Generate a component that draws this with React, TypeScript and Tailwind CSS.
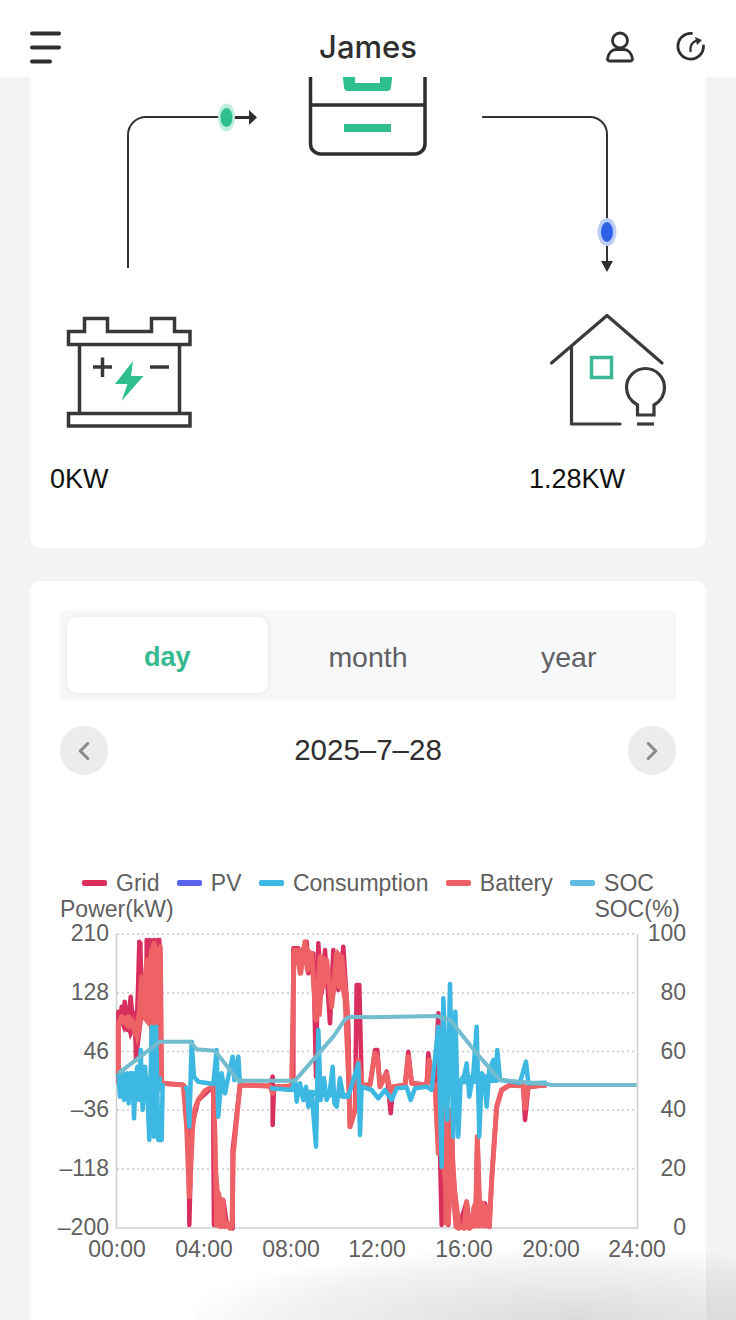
import React from "react";
import { ChevronLeft, ChevronRight } from "lucide-react";

type Pt = [number, number];

// traced from the 3x crops: left half starts at x=50, right half at x=370, both at y=860
const toLine = (left: Pt[], right: Pt[] = []) =>
  [
    ...left.map(([x, y]) => `${50 + x / 3},${860 + y / 3}`),
    ...right.map(([x, y]) => `${370 + x / 3},${860 + y / 3}`),
  ].join(" ");

const GRID = toLine(
  [[205,670],[205,455],[212,480],[215,440],[222,500],[224,425],[232,510],[242,410],[250,500],[255,460],[258,600],[268,245],[278,400],[290,380],[290,240],[296,400],[300,240],[306,340],[312,240],[318,420],[323,240],[328,240],[330,670],[400,675],[415,700],[418,1095],[425,800],[445,720],[490,678],[490,830],[492,1095],[502,1095],[505,1020],[520,1020],[530,1090],[548,1105],[548,870],[570,675],[660,678],[668,650],[668,795],[672,680],[730,680],[730,265],[745,265],[750,340],[770,245],[775,340],[790,280],[798,650],[805,250],[815,400],[825,270],[840,490],[850,270],[865,390],[880,260],[895,500],[900,800],[915,750],[920,375],[928,375],[935,675]],
  [[0,675],[15,570],[22,570],[30,680],[50,635],[62,760],[70,680],[105,675],[115,575],[125,670],[170,675],[175,580],[185,670],[195,675],[205,460],[210,880],[215,1095],[225,680],[235,1095],[245,900],[265,1105],[290,1025],[300,1105],[318,1030],[322,830],[330,1090],[345,1030],[358,1100],[365,960],[380,740],[395,690],[420,675],[460,678],[465,780],[475,680],[530,675]]
);

const BATTERY = toLine(
  [[205,670],[205,490],[215,470],[225,490],[235,470],[245,480],[255,520],[268,460],[275,350],[282,440],[290,300],[296,460],[303,280],[312,250],[320,290],[326,420],[331,260],[335,670],[400,675],[410,800],[418,1010],[428,800],[435,745],[445,720],[465,692],[490,678],[495,830],[500,1095],[506,1000],[512,1100],[518,1020],[524,1100],[532,1090],[540,1105],[546,1100],[550,880],[570,675],[660,678],[668,700],[680,680],[725,678],[732,270],[745,270],[752,340],[765,245],[772,330],[785,280],[798,480],[810,290],[820,380],[830,300],[845,440],[860,280],[868,380],[875,290],[890,420],[900,800],[915,750],[925,600],[935,675]],
  [[0,675],[15,580],[22,590],[30,680],[50,640],[62,700],[70,680],[105,675],[115,590],[125,670],[170,675],[178,600],[185,670],[195,675],[205,880],[208,640],[215,700],[225,590],[228,1090],[235,1090],[238,800],[245,750],[250,1000],[258,1100],[268,1105],[275,1100],[282,1105],[290,1025],[296,1105],[305,1100],[312,1040],[318,1030],[322,830],[330,1090],[338,1030],[345,1085],[352,1040],[358,1100],[365,960],[380,740],[395,690],[420,675],[460,678],[465,745],[475,680],[530,675]]
);

// where the spikes sit so close that the lines read as one solid mass
const GRID_MASS = [
  toLine([[205,455],[215,455],[222,425],[230,455],[242,410],[255,460],[268,245],[278,245],[278,400],[290,380],[290,240],[330,240],[332,670],[320,670],[318,420],[300,450],[290,440],[280,470],[265,590],[255,600],[250,520],[240,540],[230,500],[222,520],[212,490],[205,520]]),
];
const BATTERY_MASS = [
  toLine([[205,480],[225,465],[235,480],[255,500],[268,440],[275,350],[290,450],[303,270],[320,260],[330,400],[338,670],[312,660],[296,500],[280,480],[262,560],[248,500],[235,510],[215,490],[205,520]]),
  toLine([[495,830],[510,1000],[520,1020],[530,1085],[545,1090],[550,880],[555,880],[548,1105],[505,1105],[492,1095]]),
  toLine([[730,268],[750,268],[765,242],[785,275],[798,440],[810,280],[830,295],[845,400],[860,265],[875,285],[890,410],[905,780],[895,800],[878,420],[865,350],[850,440],[835,400],[825,320],[815,470],[795,470],[785,320],[770,300],[745,340],[735,300],[730,670]]),
  toLine([], [[205,640],[225,590],[232,740],[245,750],[262,1000],[275,1100],[290,1030],[300,1090],[318,1030],[322,830],[332,1040],[345,1030],[355,1090],[365,960],[360,1105],[262,1105],[245,900],[238,1000],[228,800],[222,1000],[212,900],[205,880]]),
];

// flat stretches left out, the battery line shows there
const CONSUMPTION = [
  toLine([[205,640],[210,710],[214,640],[218,630],[222,720],[226,650],[232,640],[236,730],[241,640],[248,640],[252,775],[257,660],[262,620],[267,720],[272,570],[278,750],[285,620],[292,700],[298,840],[305,500],[312,830],[318,500],[325,840],[335,840],[338,670]]),
  toLine([[405,678],[412,690],[418,800],[425,545],[432,650],[445,665],[490,672],[500,570],[505,770],[515,640],[525,700],[535,650],[548,590],[553,660],[565,590],[570,670]]),
  toLine(
    [[660,685],[725,690],[735,660],[740,725],[750,670],[760,720],[768,680],[775,740],[785,700],[798,860],[805,510],[812,720],[822,655],[830,720],[840,690],[848,620],[853,730],[860,740],[870,655],[880,710],[895,710],[925,610],[930,825],[935,680]],
    [[5,690],[25,715],[45,690],[65,720],[80,685],[110,682],[122,720],[135,685],[170,680],[185,690],[205,500],[215,920],[220,415],[232,780],[240,372],[250,830],[256,455],[265,830],[272,660],[280,660],[290,610],[298,710],[310,640],[320,500],[328,830],[335,640],[342,650],[350,740],[358,630],[370,600],[376,650],[382,570],[390,660],[450,668],[468,605],[475,670],[530,668]]
  ),
];
const CONSUMPTION_BANDS = [
  { points: toLine([[207,672],[336,672]]), width: 15 },
  { points: toLine([[745,695],[895,708]]), width: 6 },
  { points: toLine([], [[272,660],[385,655]]), width: 9 },
];

const SOC = toLine(
  [[205,640],[330,545],[420,545],[440,568],[495,572],[565,662],[735,662],[850,530],[885,478],[900,470],[960,472]],
  [[0,472],[200,468],[240,480],[320,580],[390,660],[530,672],[545,675],[800,675]]
);

const LEGEND = [
  { name: "Grid", color: "bg-[#dc2f5c]" },
  { name: "PV", color: "bg-[#5b63ec]" },
  { name: "Consumption", color: "bg-[#3db8e2]" },
  { name: "Battery", color: "bg-[#ec5f67]" },
  { name: "SOC", color: "bg-[#5fbbdf]" },
];

const LEFT_AXIS = [
  { label: "210", y: 934 },
  { label: "128", y: 993 },
  { label: "46", y: 1051.5 },
  { label: "–36", y: 1110 },
  { label: "–118", y: 1169 },
  { label: "–200", y: 1228 },
];
const RIGHT_AXIS = ["100", "80", "60", "40", "20", "0"];
const TIMES = [
  { label: "00:00", x: 117 },
  { label: "04:00", x: 204 },
  { label: "08:00", x: 291 },
  { label: "12:00", x: 377 },
  { label: "16:00", x: 464 },
  { label: "20:00", x: 551 },
  { label: "24:00", x: 637 },
];

const Header = () => (
  <header className="relative z-10 h-[77px] shrink-0 bg-white">
    <div className="flex h-full items-center justify-between pl-[30px] pr-[30px] pt-[17px]">
      <svg width="31" height="33" viewBox="0 0 31 33" fill="none" stroke="#2f2f2f" strokeWidth="4" strokeLinecap="round">
        <path d="M2 2.500h27M2 16.500h27M2 30.500h18" />
      </svg>
      <div className="flex items-center gap-[40px]">
        <svg width="32" height="32" viewBox="0 0 32 32" fill="none" stroke="#2f2f2f" strokeWidth="2.800">
          <circle cx="16" cy="9.500" r="7.500" />
          <path d="M5.500 30H26.500a2 2 0 0 0 2-2.500C27.500 22 24 18.500 20 18.500H12C8 18.500 4.500 22 3.500 27.500a2 2 0 0 0 2 2.500z" />
        </svg>
        <svg width="30" height="30" viewBox="0 0 30 30" fill="none" stroke="#2f2f2f" strokeWidth="2.800" strokeLinecap="round">
          <path d="M15.500 1.500A12.800 12.800 0 1 0 27.500 14" />
          <path d="M14.500 19c-.5-5 2-9 6-10.500" strokeWidth="2.400" />
          <path d="M19 5l7 3-5 5z" fill="#2f2f2f" stroke="none" />
        </svg>
      </div>
    </div>
    <h1 className="absolute inset-x-0 bottom-[11px] text-center font-['Inter',sans-serif] text-[31px] font-medium leading-[38px] text-[#2f2f2f]">
      James
    </h1>
  </header>
);

const FlowDiagram = () => (
  // viewBox uses page coordinates of the card
  <svg className="block" width="676" height="380" viewBox="30 77 676 380" fill="none">
    {/* inverter */}
    <path d="M310.500 70V144a10 10 0 0 0 10 10H415a10 10 0 0 0 10-10V70M310 105H425" stroke="#2f2f2f" strokeWidth="3.500" />
    <path d="M342 70H355V83H380V70H393L391 87a4 4 0 0 1-4 4H348a4 4 0 0 1-4-4z" fill="#2fbf8e" />
    <rect x="344" y="124" width="47" height="8" fill="#2fbf8e" />

    {/* battery to inverter */}
    <path d="M128 268V135a18 18 0 0 1 18-18H228" stroke="#333" strokeWidth="2" />
    <path d="M228 117.500H251" stroke="#2f2f2f" strokeWidth="3" />
    <path d="M249 110L257 117.500 249 125z" fill="#2f2f2f" />
    <ellipse cx="226.500" cy="117.500" rx="8.500" ry="14" fill="#bfeedd" />
    <ellipse cx="226.500" cy="117.500" rx="6" ry="9.500" fill="#2fbf8e" />

    {/* inverter to house */}
    <path d="M482 117H590a17 17 0 0 1 17 17V263" stroke="#333" strokeWidth="2" />
    <path d="M601 261H613L607 272z" fill="#2f2f2f" />
    <ellipse cx="607" cy="232" rx="9.500" ry="14" fill="#bcccf5" />
    <ellipse cx="607" cy="232" rx="6" ry="10" fill="#2e62e6" />

    {/* battery */}
    <g stroke="#383838" strokeWidth="3.500">
      <path d="M68.500 331.500H84.500V318.500H107.500V331.500H151.500V318.500H174.500V331.500H190V344.500H68.500z" />
      <path d="M79.500 344.500V413.500M179.500 344.500V413.500" />
      <rect x="68.500" y="413.500" width="121.500" height="12.500" />
      <path d="M93 367H112M102.500 357.500V377M150 367H169" />
    </g>
    <path d="M133 361L115 384H127.500L121.500 401L143.500 376H131z" fill="#2fbf8e" />

    {/* house */}
    <g stroke="#3a3a3a" strokeWidth="3.200" strokeLinecap="round">
      <path d="M551.500 363L607 315.500L662 363" strokeLinejoin="round" />
      <path d="M571.500 347V424H620" strokeLinejoin="round" />
      <path d="M637.500 415H654V405C661 401 664.500 394.500 664.500 387.500A19 19 0 0 0 626.500 387.500C626.500 394.500 630.500 401 637.500 405z" />
      <path d="M637 424H654" strokeLinecap="butt" />
    </g>
    <rect x="591.500" y="357.500" width="20" height="20" stroke="#3cb795" strokeWidth="3.500" />
  </svg>
);

const Chart = () => (
  <svg className="-mx-[30px] -mt-[6px] block" width="676" height="351" viewBox="30 916 676 351" fill="none">
    {[934, 993, 1051.5, 1110, 1169].map((y) => (
      <path key={y} d={`M117 ${y}H637`} stroke="#c9c9c9" strokeWidth="1.500" strokeDasharray="2 3" />
    ))}
    <path d="M116.500 934V1228H637.500V934" stroke="#cfcfcf" strokeWidth="1.500" />

    <g strokeLinejoin="round">
      {GRID_MASS.map((points, i) => (
        <polygon key={i} points={points} fill="#d92f5e" />
      ))}
      <polyline points={GRID} stroke="#d92f5e" strokeWidth="4.500" />
      {BATTERY_MASS.map((points, i) => (
        <polygon key={i} points={points} fill="#ee6266" />
      ))}
      <polyline points={BATTERY} stroke="#ee6266" strokeWidth="5" />
      {CONSUMPTION_BANDS.map((band, i) => (
        <polyline key={i} points={band.points} stroke="#3db8e2" strokeWidth={band.width} />
      ))}
      {CONSUMPTION.map((points, i) => (
        <polyline key={i} points={points} stroke="#3db8e2" strokeWidth="4.500" />
      ))}
      <polyline points={SOC} stroke="#72bcd0" strokeWidth="4" />
    </g>

    <g className="text-[23px]" fill="#5f5f5f">
      {LEFT_AXIS.map((tick) => (
        <text key={tick.label} x="109" y={tick.y + 7} textAnchor="end">
          {tick.label}
        </text>
      ))}
      {RIGHT_AXIS.map((label, i) => (
        <text key={label} x="686" y={LEFT_AXIS[i].y + 7} textAnchor="end">
          {label}
        </text>
      ))}
      {TIMES.map((t) => (
        <text key={t.label} x={t.x} y="1257" textAnchor="middle">
          {t.label}
        </text>
      ))}
    </g>
  </svg>
);

export default function App() {
  return (
    <div className="relative flex h-[1320px] w-[736px] flex-col overflow-hidden bg-[#f4f4f4] font-['Liberation_Sans',Arial,sans-serif]">
      <Header />

      <main className="flex flex-1 flex-col gap-[33px] px-[30px]">
        <section className="h-[471px] shrink-0 rounded-b-[10px] bg-white">
          <FlowDiagram />
          <div className="mt-[6px] flex text-[27px] leading-[32px] text-[#111]">
            <span className="ml-[20px] w-[479px]">0KW</span>
            <span>1.28KW</span>
          </div>
        </section>

        <section className="flex-1 rounded-t-[10px] bg-white px-[30px] pt-[29px]">
          <div className="grid h-[90px] grid-cols-3 bg-[#f7f8fa] p-[7px] text-[28.500px]">
            <div className="flex items-center justify-center rounded-[10px] bg-white pt-[4px] text-[27px] font-bold text-[#35b98f] shadow-[0_0_6px_rgba(0,0,0,0.08)]">
              day
            </div>
            <div className="flex items-center justify-center pt-[4px] text-[#5f6064]">month</div>
            <div className="flex items-center justify-center pt-[4px] text-[#5f6064]">year</div>
          </div>

          <div className="mt-[26px] flex items-center justify-between">
            <div className="flex h-[49px] w-[48px] items-center justify-center rounded-full bg-[#ececec] text-[#8a8a8a]">
              <ChevronLeft size={30} strokeWidth={2.5} />
            </div>
            <span className="text-[29.500px] text-[#2f2f2f]">2025–7–28</span>
            <div className="flex h-[49px] w-[48px] items-center justify-center rounded-full bg-[#ececec] text-[#8a8a8a]">
              <ChevronRight size={30} strokeWidth={2.5} />
            </div>
          </div>

          <div className="mt-[95px] flex items-center justify-between px-[22px] text-[23px] leading-[26px] text-[#5f5f5f]">
            {LEGEND.map((item) => (
              <div key={item.name} className="flex items-center gap-[9px]">
                <span className={`h-[6px] w-[25px] rounded-[2px] ${item.color}`} />
                <span>{item.name}</span>
              </div>
            ))}
          </div>
          <div className="-mr-[4px] flex justify-between text-[23px] leading-[26px] text-[#5f5f5f]">
            <span>Power(kW)</span>
            <span>SOC(%)</span>
          </div>
          <Chart />
        </section>
      </main>

      {/* blurred smudge at the bottom of the photo */}
      <div className="pointer-events-none absolute bottom-0 right-0 h-[70px] w-[540px] bg-[radial-gradient(ellipse_at_70%_100%,rgba(0,0,0,0.14),rgba(0,0,0,0.05)_55%,rgba(0,0,0,0)_75%)]" />
    </div>
  );
}
